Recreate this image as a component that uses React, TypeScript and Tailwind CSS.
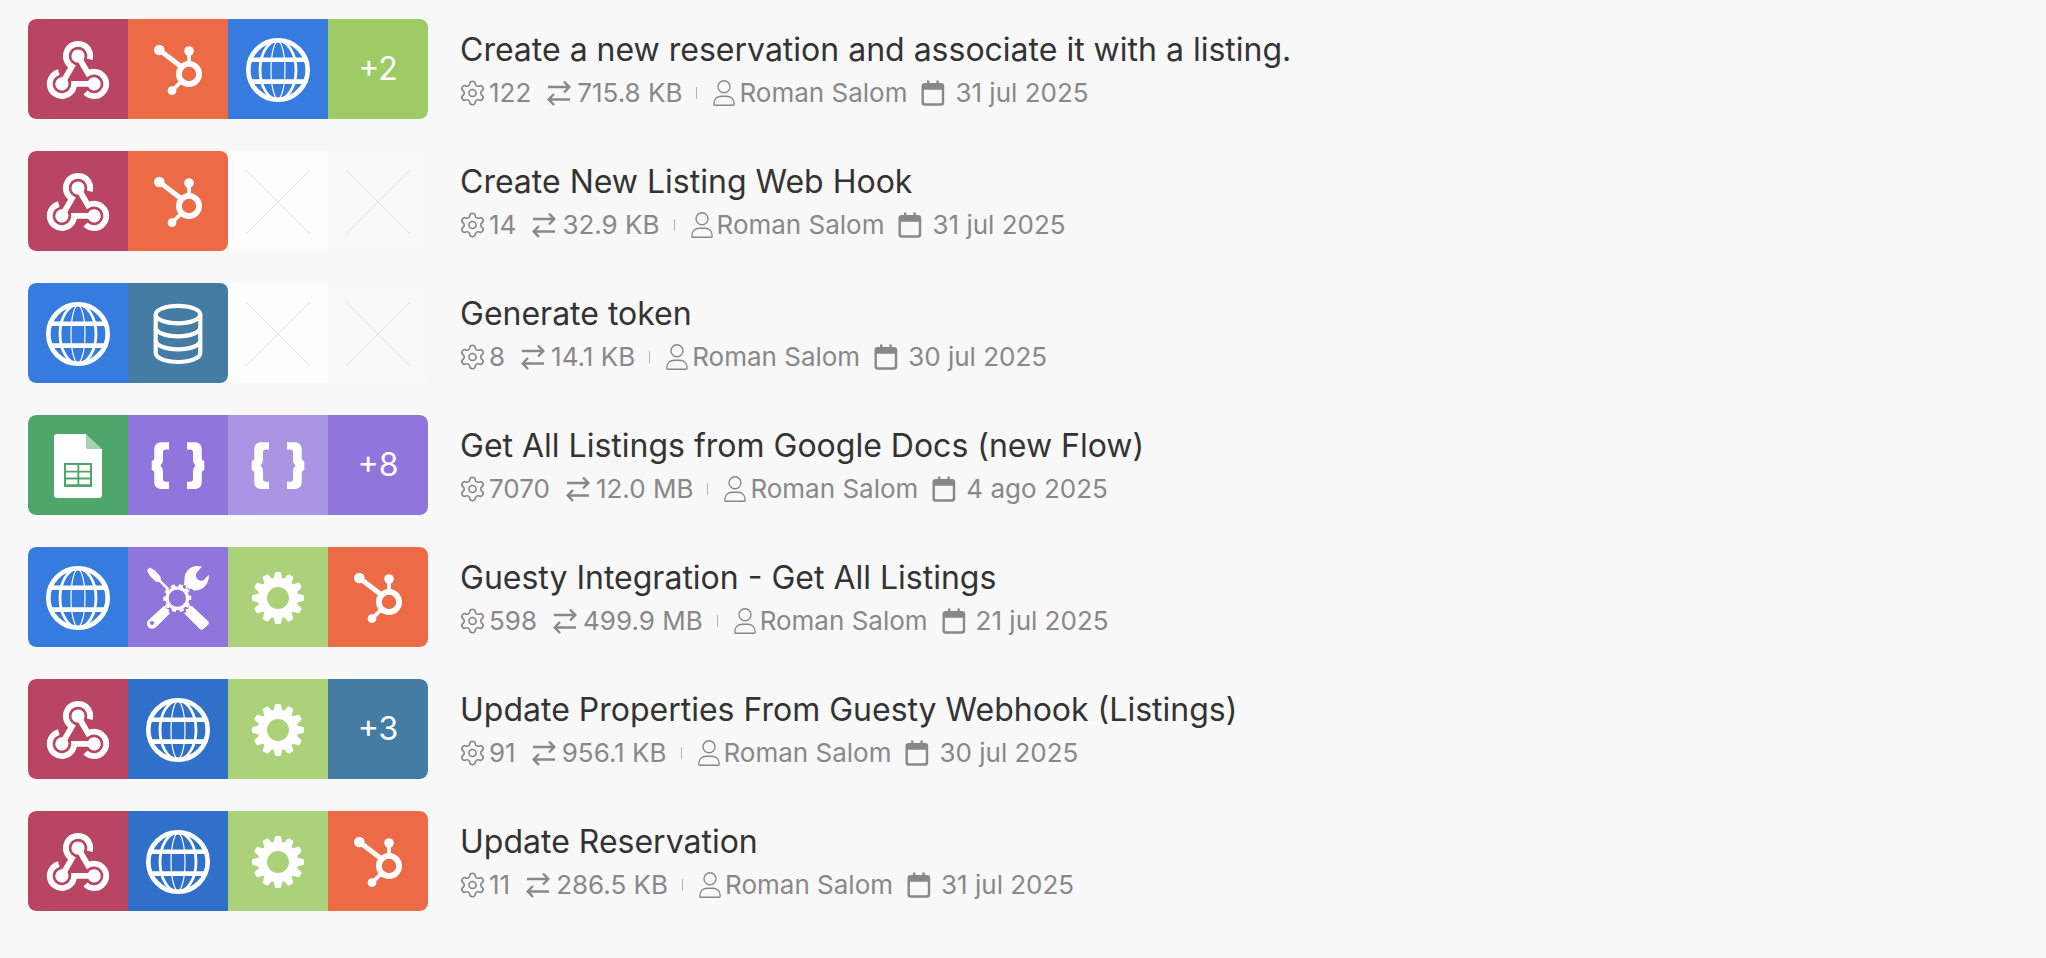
import type { ReactNode } from "react"
import { Settings } from "lucide-react"
import { cva } from "class-variance-authority"
import clsx from "clsx"

type ModuleKind =
  | "webhook"
  | "hubspot"
  | "http"
  | "httpDark"
  | "database"
  | "sheets"
  | "json"
  | "jsonLight"
  | "tools"
  | "gear"

type MoreTone = "green" | "purple" | "steel"

interface Flow {
  title: string
  modules: ModuleKind[]
  more?: { count: number; tone: MoreTone }
  operations: number
  transfer: string
  author: string
  date: string
}

const flows: Flow[] = [
  {
    title: "Create a new reservation and associate it with a listing.",
    modules: ["webhook", "hubspot", "http"],
    more: { count: 2, tone: "green" },
    operations: 122,
    transfer: "715.8 KB",
    author: "Roman Salom",
    date: "31 jul 2025",
  },
  {
    title: "Create New Listing Web Hook",
    modules: ["webhook", "hubspot"],
    operations: 14,
    transfer: "32.9 KB",
    author: "Roman Salom",
    date: "31 jul 2025",
  },
  {
    title: "Generate token",
    modules: ["http", "database"],
    operations: 8,
    transfer: "14.1 KB",
    author: "Roman Salom",
    date: "30 jul 2025",
  },
  {
    title: "Get All Listings from Google Docs (new Flow)",
    modules: ["sheets", "json", "jsonLight"],
    more: { count: 8, tone: "purple" },
    operations: 7070,
    transfer: "12.0 MB",
    author: "Roman Salom",
    date: "4 ago 2025",
  },
  {
    title: "Guesty Integration - Get All Listings",
    modules: ["http", "tools", "gear", "hubspot"],
    operations: 598,
    transfer: "499.9 MB",
    author: "Roman Salom",
    date: "21 jul 2025",
  },
  {
    title: "Update Properties From Guesty Webhook (Listings)",
    modules: ["webhook", "httpDark", "gear"],
    more: { count: 3, tone: "steel" },
    operations: 91,
    transfer: "956.1 KB",
    author: "Roman Salom",
    date: "30 jul 2025",
  },
  {
    title: "Update Reservation",
    modules: ["webhook", "httpDark", "gear", "hubspot"],
    operations: 11,
    transfer: "286.5 KB",
    author: "Roman Salom",
    date: "31 jul 2025",
  },
]

const tile = cva("size-[100px] shrink-0", {
  variants: {
    kind: {
      webhook: "bg-[#b84562]",
      hubspot: "bg-[#ec6a46]",
      http: "bg-[#367bde]",
      httpDark: "bg-[#3070c8]",
      database: "bg-[#457ca4]",
      sheets: "bg-[#4ea66a]",
      json: "bg-[#8f75dc]",
      jsonLight: "bg-[#a995e4]",
      tools: "bg-[#8f75dc]",
      gear: "bg-[#abd27b]",
    },
  },
})

const moreTones: Record<MoreTone, string> = {
  green: "bg-[#9fcb66]",
  purple: "bg-[#8f75dc]",
  steel: "bg-[#457ca4]",
}

// All module glyphs share a 100x100 canvas, the size of a tile
function Glyph({ children }: { children: ReactNode }) {
  return (
    <svg viewBox="0 0 100 100" className="size-full text-white" fill="currentColor" aria-hidden="true">
      {children}
    </svg>
  )
}

function WebhookGlyph() {
  return (
    <Glyph>
      {[0, 120, 240].map((angle) => (
        <g key={angle} transform={`rotate(${angle} 50 55.6)`}>
          <path
            d="M33.9 64.9 L43.9 47.6 A12.2 12.2 0 1 1 61.8 40.2"
            fill="none"
            stroke="currentColor"
            strokeWidth="5.8"
          />
          <circle cx="50" cy="37" r="6.6" />
        </g>
      ))}
    </Glyph>
  )
}

function HubspotGlyph() {
  return (
    <Glyph>
      <circle cx="31.3" cy="31" r="5.3" />
      <circle cx="61" cy="32" r="4.8" />
      <circle cx="44" cy="71.7" r="4.4" />
      <g fill="none" stroke="currentColor">
        <circle cx="61" cy="55" r="10.1" strokeWidth="5.8" />
        <path d="M32 31.5 L53 47.5" strokeWidth="4.8" />
        <path d="M61 32 V44.5" strokeWidth="3.8" />
        <path d="M44 71.7 L53.2 62.6" strokeWidth="3.8" />
      </g>
    </Glyph>
  )
}

function GlobeGlyph() {
  return (
    <Glyph>
      <g fill="none" stroke="currentColor">
        <circle cx="50" cy="51" r="29.7" strokeWidth="4.6" />
        <ellipse cx="50" cy="51" rx="18" ry="29.5" strokeWidth="2.8" />
        <ellipse cx="50" cy="51" rx="7" ry="28.5" strokeWidth="1.2" />
        <path d="M22 40.7 H78 M22 62.6 H78" strokeWidth="4.6" />
      </g>
    </Glyph>
  )
}

function DatabaseGlyph() {
  return (
    <Glyph>
      <g fill="none" stroke="currentColor" strokeWidth="4.2">
        <ellipse cx="50" cy="31.6" rx="22.3" ry="8.8" />
        <path d="M27.7 31.6 V70 C27.7 75 37.5 79 50 79 S72.3 75 72.3 70 V31.6" />
        <path d="M27.7 44.5 C27.7 49.4 37.5 53.3 50 53.3 S72.3 49.4 72.3 44.5" />
        <path d="M27.7 57.5 C27.7 62.4 37.5 66.3 50 66.3 S72.3 62.4 72.3 57.5" />
      </g>
    </Glyph>
  )
}

function SheetsGlyph() {
  return (
    <Glyph>
      <path d="M29 19 H58 V31 Q58 34 61 34 H74 V80 Q74 83 71 83 H29 Q26 83 26 80 V22 Q26 19 29 19Z" />
      <path d="M58 19 L74 34 H61 Q58 34 58 31Z" fill="#a6d3b5" />
      <rect x="36" y="48" width="28" height="24" fill="#4ea66a" />
      <path d="M38 50h11.4v5.7H38z M51.3 50H62v5.7H51.3z M38 57.6h11.4v4.8H38z M51.3 57.6H62v4.8H51.3z M38 64.4h11.4v4.8H38z M51.3 64.4H62v4.8H51.3z" />
    </Glyph>
  )
}

const BRACE =
  "M41 27.3 H34 C29 27.3 26.3 30 26.3 34 V44 Q26 45.7 23.7 46 V55 Q26.3 55.7 26.3 58 V67 C26.3 71.5 29 74 34 74 H41 V66.7 H38 Q35 66.7 35 64 V56 Q34.8 52.5 32.4 50.5 Q34.8 48.7 35 45.5 V37 Q35 34.4 38 34.4 H41Z"

function JsonGlyph() {
  return (
    <Glyph>
      <path d={BRACE} />
      <path d={BRACE} transform="matrix(-1 0 0 1 100 0)" />
    </Glyph>
  )
}

function GearGlyph() {
  return (
    <Glyph>
      <circle cx="50" cy="51" r="15.6" fill="none" stroke="currentColor" strokeWidth="9.2" />
      {Array.from({ length: 12 }, (_, i) => (
        <path
          key={i}
          d="M45.3 33 L46.9 26 Q47.2 25 48.2 25 H51.8 Q52.8 25 53.1 26 L54.7 33Z"
          transform={`rotate(${i * 30} 50 51)`}
        />
      ))}
    </Glyph>
  )
}

function ToolsGlyph() {
  return (
    <Glyph>
      <circle cx="49.3" cy="51.2" r="10.2" fill="none" stroke="currentColor" strokeWidth="3.2" />
      {Array.from({ length: 10 }, (_, i) => (
        <path key={i} d="M46.8 41 L47.3 37.2 H51.3 L51.8 41Z" transform={`rotate(${i * 36 + 16} 49.3 51.2)`} />
      ))}
      {/* screwdriver */}
      <path d="M19 23.5 L21.6 20.6 L26.7 23.3 L32.4 29.5 L33.2 33.6 L41.4 41.4 L39.4 43.4 L31.6 35.2 L27.6 34.6 L22 29Z" />
      {/* wrench head */}
      <path d="M74 19.6 C65 16.8 55.8 22.5 56.5 33.5 L55.6 38.6 L58 38 L57.4 41.6 L60 40.4 L61.5 42.6 L63.8 41.4 L65.5 43.4 C73.5 44 81.2 38.5 81 27.8 L75.4 33.2 C73 34.4 69.6 33 68.4 31 C67.4 28.6 67.6 26.8 69 25.2Z" />
      {/* wrench handle */}
      <path
        fillRule="evenodd"
        d="M35.6 59.3 L38.2 59.2 L38.5 62 L41.2 62.6 L40.6 65 L42.2 66 L28.3 80 C25.8 82.4 22.4 82.2 20.6 80.4 C18.4 78.2 18.4 75.4 20.6 73Z M24 73.9 a2.1 2.1 0 1 0 0.01 0Z"
      />
      {/* screwdriver grip */}
      <path d="M60.4 58.6 L64.2 59.2 L80.4 74.6 Q81.6 76 80.4 77.4 L75 82.2 Q73.4 83.3 71.8 82 L55.8 66 L58.4 65.4 L57.6 62.6 L60.6 61.8Z" />
    </Glyph>
  )
}

const glyphs: Record<ModuleKind, () => ReactNode> = {
  webhook: WebhookGlyph,
  hubspot: HubspotGlyph,
  http: GlobeGlyph,
  httpDark: GlobeGlyph,
  database: DatabaseGlyph,
  sheets: SheetsGlyph,
  json: JsonGlyph,
  jsonLight: JsonGlyph,
  tools: ToolsGlyph,
  gear: GearGlyph,
}

function EmptyTile({ faded }: { faded: boolean }) {
  return (
    <div className={clsx("size-[100px] shrink-0", faded ? "bg-[#f9f9f9]" : "bg-[#fdfdfd]")}>
      <svg viewBox="0 0 100 100" className="size-full text-[#e2e2e2]" aria-hidden="true">
        <path d="M18 19 L82 83 M82 19 L18 83" stroke="currentColor" strokeWidth="1" />
      </svg>
    </div>
  )
}

function ModuleStrip({ flow }: { flow: Flow }) {
  const used = flow.modules.length + (flow.more ? 1 : 0)

  return (
    <div className="flex shrink-0 overflow-hidden rounded-lg">
      <div className="flex overflow-hidden rounded-lg">
        {flow.modules.map((kind, i) => {
          const ModuleGlyph = glyphs[kind]
          return (
            <div key={i} className={tile({ kind })}>
              <ModuleGlyph />
            </div>
          )
        })}
        {flow.more && (
          <div
            className={clsx(
              "flex size-[100px] shrink-0 items-center justify-center text-[32px] text-white",
              moreTones[flow.more.tone],
            )}
          >
            +{flow.more.count}
          </div>
        )}
      </div>
      {Array.from({ length: 4 - used }, (_, i) => (
        <EmptyTile key={i} faded={i > 0} />
      ))}
    </div>
  )
}

function TransferIcon() {
  return (
    <svg width="24" height="26" viewBox="0 0 24 26" fill="none" stroke="currentColor" strokeWidth="2.4" aria-hidden="true">
      <path d="M1 7 H22 M17 1.5 L22.3 7 L17 12.5 M23 19.5 H2 M7 14 L1.7 19.5 L7 25" />
    </svg>
  )
}

function PersonIcon() {
  return (
    <svg width="22" height="26" viewBox="0 0 22 26" fill="none" stroke="currentColor" strokeWidth="1.4" aria-hidden="true">
      <circle cx="11" cy="6.8" r="6" />
      <path d="M2 25.2 Q0.8 25.2 0.8 24 C0.8 19 4 16.3 8.5 16.3 H13.5 C18 16.3 21.2 19 21.2 24 Q21.2 25.2 20 25.2Z" />
    </svg>
  )
}

function CalendarIcon() {
  return (
    <svg width="24" height="26" viewBox="0 0 24 26" fill="currentColor" aria-hidden="true">
      <path
        fillRule="evenodd"
        d="M6 0.5 H8.4 V3 H15.4 V0.5 H17.8 V3 H20 Q23.2 3 23.2 6 V22.5 Q23.2 25.7 20 25.7 H3.7 Q0.5 25.7 0.5 22.5 V6 Q0.5 3 3.7 3 H6Z M2.9 9.8 V21.8 Q2.9 23.3 4.4 23.3 H19.3 Q20.8 23.3 20.8 21.8 V9.8Z"
      />
    </svg>
  )
}

function FlowRow({ flow }: { flow: Flow }) {
  return (
    <li className="flex items-center gap-8">
      <ModuleStrip flow={flow} />
      <div className="min-w-0">
        <h2 className="text-[32px] leading-[42px] text-[#333333]">{flow.title}</h2>
        <div className="mt-1.5 flex items-center text-[26px] leading-8 text-[#888888]">
          <span className="flex items-center gap-1">
            <Settings width={25} height={26} viewBox="2 1 20 22" strokeWidth={1.4} aria-hidden="true" />
            {flow.operations}
          </span>
          <span className="ml-4 flex items-center gap-1.5">
            <TransferIcon />
            {flow.transfer}
          </span>
          <span className="ml-3.5 h-3 w-px bg-[#b5b5b5]" />
          <span className="ml-4 flex items-center gap-1">
            <PersonIcon />
            {flow.author}
          </span>
          <span className="ml-3.5 flex items-center gap-2.5">
            <CalendarIcon />
            {flow.date}
          </span>
        </div>
      </div>
    </li>
  )
}

export default function App() {
  return (
    <main className="min-h-screen bg-[#f8f8f8] px-7 pt-[19px] pb-12 font-[Inter,sans-serif]">
      <ul className="flex flex-col gap-8">
        {flows.map((flow) => (
          <FlowRow key={flow.title} flow={flow} />
        ))}
      </ul>
    </main>
  )
}
